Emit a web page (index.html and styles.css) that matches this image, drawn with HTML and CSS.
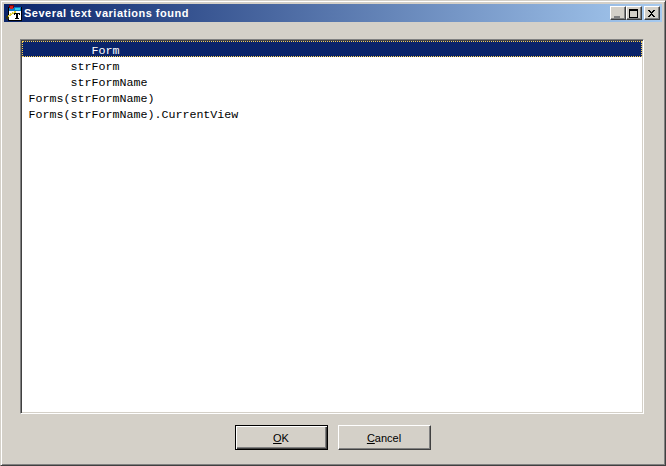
FILE: index.html
```html
<!DOCTYPE html>
<html lang="en">
<head>
<meta charset="utf-8">
<title>Several text variations found</title>
<link rel="stylesheet" href="styles.css">
</head>
<body>
<div class="window">
  <div class="titlebar">
    <svg class="appicon" width="16" height="16" viewBox="0 0 16 16" shape-rendering="crispEdges">
      <rect x="2" y="2" width="14" height="14" fill="#000"/>
      <rect x="3" y="6" width="12" height="9" fill="#fff"/>
      <rect x="3" y="2" width="12" height="4" fill="#0a7cc8"/>
      <rect x="9" y="3" width="5" height="2" fill="#30d0e8"/>
      <rect x="3" y="0" width="5" height="3" fill="#800000"/>
      <rect x="4" y="1" width="3" height="3" fill="#d02020"/>
      <path d="M2 10h1V9h1V8h2V7h2V6h2v2H8v1H6v1H5v1H3v1H2z" fill="#d8c830"/>
      <path d="M3 9h2V8h2V7h1v1H6v1H4v1H3z" fill="#f8f0a0"/>
      <path d="M0 11h2v1h1v2H0z" fill="#303010"/>
      <path d="M8 8h6v2h-1V9h-1v4h1v1H9v-1h1V9H9v1H8z" fill="#000"/>
    </svg>
    <span class="title">Several text variations found</span>
    <div class="controls">
      <button class="ctl"><svg width="10" height="9" viewBox="0 0 10 9" shape-rendering="crispEdges"><rect x="1" y="7" width="6" height="2" fill="#808080"/></svg></button>
      <button class="ctl"><svg width="10" height="9" viewBox="0 0 10 9" shape-rendering="crispEdges"><path d="M0 0h9v9H0zM1 2v6h7V2z" fill="#000" fill-rule="evenodd"/></svg></button>
      <button class="ctl ctl-close"><svg width="10" height="9" viewBox="0 0 10 9" shape-rendering="crispEdges"><path d="M1 1h2v1h1v1h1V2h1V1h2v1H7v1H6v1H5v1h1v1h1v1h1v1H6V7H5V6H4v1H3v1H1V7h1V6h1V5h1V4H3V3H2V2H1z" fill="#000"/></svg></button>
    </div>
  </div>
  <div class="body">
    <div class="list">
      <div class="row row-selected">         Form</div>
      <div class="row">      strForm</div>
      <div class="row">      strFormName</div>
      <div class="row">Forms(strFormName)</div>
      <div class="row">Forms(strFormName).CurrentView</div>
    </div>
    <div class="buttons">
      <button class="btn btn-default"><u>O</u>K</button>
      <button class="btn"><u>C</u>ancel</button>
    </div>
  </div>
</div>
</body>
</html>
```
FILE: styles.css
```css
* { box-sizing: border-box; }
html, body { margin: 0; padding: 0; }
body { width: 666px; height: 466px; overflow: hidden; background: #d4d0c8; }
.window {
  width: 666px; height: 466px;
  display: flex; flex-direction: column;
  padding: 2px;
  background: #d4d0c8;
  border: 1px solid;
  border-color: #d4d0c8 #404040 #404040 #d4d0c8;
  box-shadow: inset 1px 1px 0 #fff, inset -1px -1px 0 #808080;
}
.titlebar {
  margin: 1px 1px 0 1px;
  height: 18px;
  flex: none;
  display: flex; align-items: center;
  padding: 0 2px 0 2px;
  background: linear-gradient(to right, #0a246a, #a6caf0);
}
.appicon { flex: none; margin-right: 2px; }
.title {
  font: bold 11px "Liberation Sans", Arial, sans-serif;
  color: #fff;
  letter-spacing: 0.5px;
  white-space: pre;
}
.controls { margin-left: auto; display: flex; }
.ctl {
  width: 16px; height: 14px; padding: 0;
  display: flex; align-items: center; justify-content: center;
  background: #d4d0c8;
  border: 1px solid;
  border-color: #fff #404040 #404040 #fff;
  box-shadow: inset -1px -1px 0 #808080;
}
.ctl-close { margin-left: 2px; }
.body {
  flex: 1;
  display: flex; flex-direction: column;
  padding: 17px 19px 0 17px;
}
.list {
  height: 375px;
  flex: none;
  background: #fff;
  border: 1px solid;
  border-color: #808080 #fff #fff #808080;
  box-shadow: inset 1px 1px 0 #404040, inset -1px -1px 0 #d4d0c8;
  padding: 1px;
}
.row {
  height: 16px;
  padding-left: 6.5px;
  font: 11.67px/20px "Liberation Mono", "Courier New", monospace;
  color: #000;
  white-space: pre;
}
.row-selected {
  background: #0a246a;
  color: #fff;
  outline: 1px dotted #f8d050;
  outline-offset: -1px;
}
.buttons {
  display: flex; justify-content: center; gap: 10px;
  padding-top: 11px;
  padding-left: 1px;
}
.btn {
  width: 93px; height: 25px; padding: 0;
  font: 11px "Liberation Sans", Arial, sans-serif;
  color: #000;
  background: #d4d0c8;
  border: 1px solid;
  border-color: #fff #404040 #404040 #fff;
  box-shadow: inset -1px -1px 0 #808080;
}
.btn-default {
  border-color: #000;
  box-shadow: inset 1px 1px 0 #fff, inset -1px -1px 0 #404040, inset -2px -2px 0 #808080;
}
```
